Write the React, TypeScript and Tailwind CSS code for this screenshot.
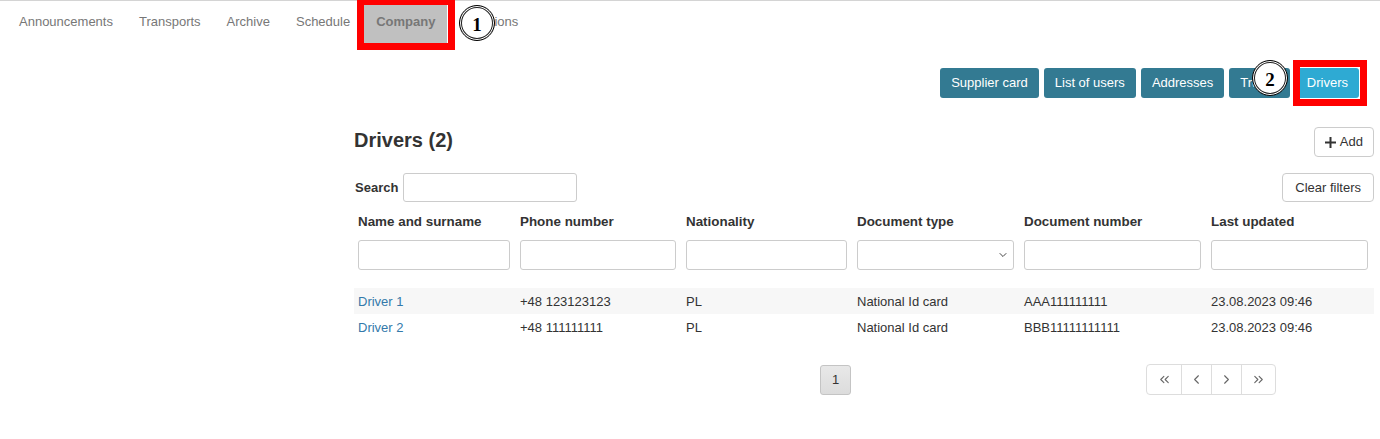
import React from 'react';
import {ChevronLeft, ChevronRight, ChevronsLeft, ChevronsRight, ChevronDown} from 'lucide-react';

const navItems = ['Announcements', 'Transports', 'Archive', 'Schedule', 'Company', 'Options'];
const tabs = ['Supplier card', 'List of users', 'Addresses', 'Trucks', 'Drivers'];

const columns = ['Name and surname', 'Phone number', 'Nationality', 'Document type', 'Document number', 'Last updated'];

const drivers = [
    {name: 'Driver 1', phone: '+48 123123123', nat: 'PL', docType: 'National Id card', docNo: 'AAA111111111', updated: '23.08.2023 09:46'},
    {name: 'Driver 2', phone: '+48 111111111', nat: 'PL', docType: 'National Id card', docNo: 'BBB11111111111', updated: '23.08.2023 09:46'},
];

const grid = 'grid grid-cols-[162px_166px_171px_167px_187px_167px]';

function Marker({n, className}: {n: string; className: string}) {
    return (
        <div
            className={`absolute w-[36px] h-[36px] rounded-full bg-white border border-black shadow-[inset_0_0_0_1px_#fff,inset_0_0_0_2px_#222] flex items-center justify-center ${className}`}
        >
            <span className="font-['Liberation_Serif',serif] font-bold text-[19px] text-black leading-none mt-[3px]">{n}</span>
        </div>
    );
}

export default function App() {
    return (
        <div className="relative w-[1380px] h-[439px] bg-white font-['Liberation_Sans',Arial,sans-serif] text-[13px] text-[#333] overflow-hidden">
            <div className="border-t border-[#d4d4d4]"/>

            {/* top nav */}
            <div className="flex pl-[6px] pt-[4px] h-[43px]">
                {navItems.map((item) =>
                    item === 'Company' ? (
                        <div key={item} className="h-[38px] pl-[13px] pr-[12px] mr-[13px] pt-[8px] leading-[18px] bg-[#c0c0c0] text-[#777] font-bold">
                            {item}
                        </div>
                    ) : (
                        <div key={item} className="h-[38px] px-[13px] pt-[8px] leading-[18px] text-[#777]">
                            {item}
                        </div>
                    )
                )}
            </div>

            <div className="flex">
                <div className="w-[354px] shrink-0"/>
                <div className="w-[1020px]">
                    {/* tabs */}
                    <div className="flex justify-end gap-[5px] pr-[15px] mt-[24px]">
                        {tabs.map((t) => (
                            <button
                                key={t}
                                className={`h-[30px] rounded-[3px] text-white leading-[30px] ${t === 'Drivers' ? 'bg-[#2eaad3] px-[11px] ml-[1px]' : 'bg-[#337a92] px-[11px]'}`}
                            >
                                {t}
                            </button>
                        ))}
                    </div>

                    {/* heading */}
                    <div className="flex items-center justify-between mt-[29px] h-[30px]">
                        <h2 className="text-[20px] font-bold text-[#333] leading-[24px] -mt-[5px]">Drivers (2)</h2>
                        <button className="h-[30px] px-[10px] border border-[#ccc] rounded-[4px] bg-white flex items-center gap-[4px] text-[#333]">
                            <svg width="11" height="11" viewBox="0 0 11 11">
                                <rect x="4.5" y="0" width="2" height="11" fill="#333"/>
                                <rect x="0" y="4.5" width="11" height="2" fill="#333"/>
                            </svg>
                            Add
                        </button>
                    </div>

                    {/* search */}
                    <div className="flex items-center justify-between mt-[16px]">
                        <div className="flex items-center gap-[5px] pl-[1px]">
                            <span className="font-bold">Search</span>
                            <div className="w-[174px] h-[29px] border border-[#ccc] rounded-[3px]"/>
                        </div>
                        <button className="h-[29px] px-[12px] border border-[#ccc] rounded-[4px] bg-white text-[#333]">
                            Clear filters
                        </button>
                    </div>

                    {/* column headers */}
                    <div className={grid}>
                        {columns.map((c) => (
                            <div key={c} className="pl-[4px] pr-[6px] pt-[12px] leading-[16px] font-bold text-[13.4px]">{c}</div>
                        ))}
                    </div>
                    <div className={`${grid} mt-[10px]`}>
                        {columns.map((c, i) => (
                            <div key={c} className="pl-[4px] pr-[6px]">
                                <div className="h-[30px] border border-[#ccc] rounded-[3px] bg-white flex items-center justify-end pr-[4px]">
                                    {i === 3 && <ChevronDown size={12} strokeWidth={2} className="text-[#444]"/>}
                                </div>
                            </div>
                        ))}
                    </div>

                    {/* rows */}
                    <div className="mt-[18px]">
                        {drivers.map((d, i) => (
                            <div key={d.name} className={`${grid} h-[26px] items-center pt-[1px] ${i % 2 === 0 ? 'bg-[#f7f7f7]' : ''}`}>
                                <div className="pl-[4px] text-[#3479aa]">{d.name}</div>
                                <div className="pl-[4px]">{d.phone}</div>
                                <div className="pl-[4px]">{d.nat}</div>
                                <div className="pl-[4px]">{d.docType}</div>
                                <div className="pl-[4px]">{d.docNo}</div>
                                <div className="pl-[4px]">{d.updated}</div>
                            </div>
                        ))}
                    </div>

                    {/* pagination */}
                    <div className="flex items-center mt-[24px]">
                        <div className="ml-[466px] w-[31px] h-[30px] rounded-[3px] border border-[#c4c4c4] bg-gradient-to-b from-[#e8e8e8] to-[#dcdcdc] flex items-center justify-center text-[#333]">
                            1
                        </div>
                        <div className="ml-auto mr-[98px] flex h-[31px] border border-[#ddd] rounded-[4px] text-[#666]">
                            <div className="w-[35px] flex items-center justify-center border-r border-[#ddd]"><ChevronsLeft size={15} strokeWidth={1.75}/></div>
                            <div className="w-[30px] flex items-center justify-center border-r border-[#ddd]"><ChevronLeft size={15} strokeWidth={1.75}/></div>
                            <div className="w-[30px] flex items-center justify-center border-r border-[#ddd]"><ChevronRight size={15} strokeWidth={1.75}/></div>
                            <div className="w-[33px] flex items-center justify-center"><ChevronsRight size={15} strokeWidth={1.75}/></div>
                        </div>
                    </div>
                </div>
            </div>

            {/* annotation overlays */}
            <div className="absolute left-[357px] top-0 w-[98px] h-[50px] border-[7px] border-t-[5px] border-[#ff0000]"/>
            <Marker n="1" className="left-[459px] top-[5px]"/>
            <div className="absolute left-[1293px] top-[60px] w-[74px] h-[46px] border-[7px] border-[#ff0000]"/>
            <Marker n="2" className="left-[1252px] top-[60px]"/>
        </div>
    );
}
